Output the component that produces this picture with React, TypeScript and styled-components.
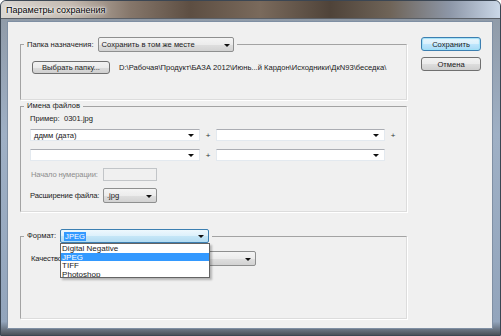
import React from "react";
import styled, { createGlobalStyle, css } from "styled-components";

const GlobalStyle = createGlobalStyle`
  html, body {
    margin: 0;
    padding: 0;
  }
  body {
    width: 501px;
    height: 336px;
    overflow: hidden;
    font-family: "Liberation Sans", Arial, sans-serif;
    color: #1a1a1a;
  }
`;

const FS = "7.6px";

const Window = styled.div`
  width: 501px;
  height: 336px;
  box-sizing: border-box;
  display: flex;
  flex-direction: column;
  border: 1px solid #3b4653;
  border-radius: 6px 6px 0 0;
  overflow: hidden;
  background: linear-gradient(
    to bottom,
    #8e98a4 0%,
    #9fb0c5 40%,
    #93a5bc 96%,
    #4b5159 100%
  );
`;

const TitleBar = styled.div`
  height: 17px;
  flex-shrink: 0;
  padding-left: 5px;
  display: flex;
  align-items: center;
  font-size: 9px;
  color: #000;
  background: linear-gradient(
    to right,
    #d9d6d2 0%,
    #c4bab0 14%,
    #85766a 26%,
    #5d4e42 38%,
    #7a6a5c 52%,
    #4f4339 66%,
    #6f6458 78%,
    #8d97a8 90%,
    #cbd8e8 100%
  );
  border-bottom: 1px solid #5a5f66;
`;

const TitleText = styled.span`
  text-shadow: 0 0 6px #fff, 0 0 3px #fff, 0 0 2px #fff;
`;

const Frame = styled.div`
  flex: 1;
  display: flex;
  padding: 2px 7px 6px 6px;
`;

const Client = styled.div`
  flex: 1;
  display: flex;
  align-items: flex-start;
  background: #f0f0f0;
  border: 1px solid #7f8fa3;
  padding: 15px 0 0 12px;
`;

const MainColumn = styled.div`
  width: 387px;
  display: flex;
  flex-direction: column;
`;

const SideColumn = styled.div`
  width: 60px;
  margin-left: 14px;
  display: flex;
  flex-direction: column;
  gap: 6px;
`;

const Group = styled.fieldset<{ $top?: number }>`
  margin: ${(p) => p.$top ?? 0}px 0 0 0;
  padding: 0;
  min-width: 0;
  border-top: 1px solid #a3a3a3;
  border-left: 1px solid #a3a3a3;
  border-right: 1px solid #dcdcdc;
  border-bottom: 1px solid #dcdcdc;
  box-shadow: 1px 1px 0 #fff;
`;

const Legend = styled.legend`
  margin-left: 3px;
  padding: 0 3px;
  display: flex;
  align-items: center;
  gap: 4px;
  font-size: ${FS};
  line-height: 10px;
`;

const GroupBody = styled.div<{ $pad: string }>`
  padding: ${(p) => p.$pad};
  display: flex;
  flex-direction: column;
  font-size: ${FS};
`;

const Text = styled.span`
  font-size: ${FS};
  white-space: nowrap;
`;

const Arrow = styled.span<{ $right: number }>`
  position: absolute;
  right: ${(p) => p.$right}px;
  top: 50%;
  margin-top: -1px;
  width: 0;
  height: 0;
  border-left: 3px solid transparent;
  border-right: 3px solid transparent;
  border-top: 3px solid #111;
`;

const comboBase = css`
  position: relative;
  box-sizing: border-box;
  display: flex;
  align-items: center;
  padding-left: 3px;
  font-size: ${FS};
  white-space: nowrap;
  flex-shrink: 0;
`;

const ButtonCombo = styled.div<{ $w: number; $h: number; $focused?: boolean }>`
  ${comboBase};
  width: ${(p) => p.$w}px;
  height: ${(p) => p.$h}px;
  border-radius: 2px;
  border: 1px solid ${(p) => (p.$focused ? "#3c7fb1" : "#8e8f8f")};
  background: ${(p) =>
    p.$focused
      ? "linear-gradient(#eef8fd 0%, #dcf0fb 50%, #c5e6f7 51%, #b3dcf2 100%)"
      : "linear-gradient(#f4f4f4 0%, #ececec 50%, #dfdfdf 51%, #d2d2d2 100%)"};
`;

const EditCombo = styled.div<{ $w: number }>`
  ${comboBase};
  width: ${(p) => p.$w}px;
  height: 12px;
  background: #fff;
  border: 1px solid #e3e9ef;
  border-top-color: #abadb3;
`;

const Selected = styled.span`
  background: #3399ff;
  color: #fff;
  padding: 0 1px;
  line-height: 9px;
`;

const DisabledInput = styled.div`
  width: 54px;
  height: 13px;
  box-sizing: border-box;
  border: 1px solid #c2c5c8;
  background: #f0f0f0;
`;

const Row = styled.div<{ $top: number }>`
  display: flex;
  align-items: center;
  margin-top: ${(p) => p.$top}px;
`;

const FieldLabel = styled.span<{ $disabled?: boolean }>`
  width: 73px;
  flex-shrink: 0;
  padding-left: ${(p) => (p.$disabled ? 1 : 0)}px;
  box-sizing: border-box;
  font-size: ${FS};
  letter-spacing: -0.15px;
  white-space: nowrap;
  color: ${(p) => (p.$disabled ? "#8d8d8d" : "#1a1a1a")};
`;

const Plus = styled.span`
  width: 16px;
  text-align: center;
  font-size: 8px;
  color: #333;
`;

const PathText = styled.span`
  margin-left: 9px;
  font-size: ${FS};
  white-space: nowrap;
`;

const DialogButton = styled.div<{ $primary?: boolean }>`
  height: 14px;
  box-sizing: border-box;
  display: flex;
  align-items: center;
  justify-content: center;
  font-size: ${FS};
  border-radius: 3px;
  border: 1px solid ${(p) => (p.$primary ? "#3c7fb1" : "#707070")};
  background: ${(p) =>
    p.$primary
      ? "linear-gradient(#eaf6fd 0%, #d9f0fc 50%, #bee6fd 51%, #a7d9f5 100%)"
      : "linear-gradient(#f2f2f2 0%, #ebebeb 50%, #dddddd 51%, #cfcfcf 100%)"};
  box-shadow: ${(p) => (p.$primary ? "0 0 1px 1px #9fe0f7 inset" : "none")};
`;

const SmallButton = styled(DialogButton)`
  width: 78px;
  height: 13px;
  flex-shrink: 0;
`;

const FormatWrap = styled.div`
  position: relative;
`;

const DropList = styled.div`
  position: absolute;
  z-index: 2;
  left: 0;
  top: 100%;
  width: 150px;
  height: 35px;
  overflow: hidden;
  box-sizing: border-box;
  background: #fff;
  border: 1px solid #646464;
  box-shadow: 2px 2px 2px rgba(0, 0, 0, 0.25);
`;

const DropItem = styled.div<{ $active?: boolean }>`
  height: 8.5px;
  line-height: 9px;
  padding-left: 1px;
  font-size: 8px;
  white-space: nowrap;
  background: ${(p) => (p.$active ? "#3399ff" : "transparent")};
  color: ${(p) => (p.$active ? "#fff" : "#1a1a1a")};
`;

const formats = ["Digital Negative", "JPEG", "TIFF", "Photoshop"];

export default function App() {
  return (
    <>
      <GlobalStyle />
      <Window>
        <TitleBar>
          <TitleText>Параметры сохранения</TitleText>
        </TitleBar>
        <Frame>
          <Client>
            <MainColumn>
              <Group>
                <Legend>
                  <Text>Папка назначения:</Text>
                  <ButtonCombo $w={136} $h={15}>
                    Сохранить в том же месте
                    <Arrow $right={3} />
                  </ButtonCombo>
                </Legend>
                <GroupBody $pad="9px 0 25px 11px">
                  <Row $top={0}>
                    <SmallButton>Выбрать папку...</SmallButton>
                    <PathText>
                      D:\Рабочая\Продукт\БАЗА 2012\Июнь...й Кардон\Исходники\ДкN93\беседка\
                    </PathText>
                  </Row>
                </GroupBody>
              </Group>

              <Group $top={1}>
                <Legend>
                  <Text>Имена файлов</Text>
                </Legend>
                <GroupBody $pad="0 0 8px 9px">
                  <Row $top={3}>
                    <Text>Пример:&nbsp; 0301.jpg</Text>
                  </Row>
                  <Row $top={6}>
                    <EditCombo $w={170}>
                      ддмм (дата)
                      <Arrow $right={5} />
                    </EditCombo>
                    <Plus>+</Plus>
                    <EditCombo $w={169}>
                      <Arrow $right={5} />
                    </EditCombo>
                    <Plus>+</Plus>
                  </Row>
                  <Row $top={8}>
                    <EditCombo $w={170}>
                      <Arrow $right={5} />
                    </EditCombo>
                    <Plus>+</Plus>
                    <EditCombo $w={169}>
                      <Arrow $right={5} />
                    </EditCombo>
                  </Row>
                  <Row $top={7}>
                    <FieldLabel $disabled>Начало нумерации:</FieldLabel>
                    <DisabledInput />
                  </Row>
                  <Row $top={7}>
                    <FieldLabel>Расширение файла:</FieldLabel>
                    <ButtonCombo $w={54} $h={15}>
                      .jpg
                      <Arrow $right={4} />
                    </ButtonCombo>
                  </Row>
                </GroupBody>
              </Group>

              <Group $top={17}>
                <Legend>
                  <Text>Формат:</Text>
                  <FormatWrap>
                    <ButtonCombo $w={149} $h={14} $focused>
                      <Selected>JPEG</Selected>
                      <Arrow $right={4} />
                    </ButtonCombo>
                    <DropList>
                      {formats.map((f) => (
                        <DropItem key={f} $active={f === "JPEG"}>
                          {f}
                        </DropItem>
                      ))}
                    </DropList>
                  </FormatWrap>
                </Legend>
                <GroupBody $pad="0 0 52px 10px">
                  <Row $top={8}>
                    <FieldLabel>Качество:</FieldLabel>
                    <ButtonCombo $w={152} $h={15}>
                      <Arrow $right={4} />
                    </ButtonCombo>
                  </Row>
                </GroupBody>
              </Group>
            </MainColumn>
            <SideColumn>
              <DialogButton $primary>Сохранить</DialogButton>
              <DialogButton>Отмена</DialogButton>
            </SideColumn>
          </Client>
        </Frame>
      </Window>
    </>
  );
}
